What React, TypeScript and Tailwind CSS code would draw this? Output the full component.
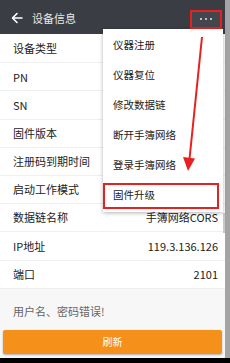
import React from "react";

const rows: [string, string][] = [
  ["设备类型", ""],
  ["PN", ""],
  ["SN", ""],
  ["固件版本", ""],
  ["注册码到期时间", ""],
  ["启动工作模式", ""],
  ["数据链名称", "手簿网络CORS"],
  ["IP地址", "119.3.136.126"],
  ["端口", "2101"],
];

const menu = ["仪器注册", "仪器复位", "修改数据链", "断开手簿网络", "登录手簿网络", "固件升级"];

export default function App() {
  return (
    <div
      className="relative w-[230px] h-[363px] overflow-hidden flex flex-col bg-black"
      style={{ fontFamily: '"Noto Sans CJK SC", "Noto Sans", Roboto, sans-serif' }}
    >
      <div className="flex h-[358px]">
        <div className="w-[225px] flex flex-col bg-[#f7f7f7]">
          <div className="h-[34px] bg-[#3a3e44] flex items-center pl-[11px]">
            <svg width="12" height="12" viewBox="0 0 12 12" className="mt-[2px]">
              <path d="M11 6H2M6 1.5L1.5 6L6 10.5" stroke="#fff" strokeWidth="1.6" fill="none" strokeLinecap="round" strokeLinejoin="round" />
            </svg>
            <span className="ml-[9px] text-[11px] text-[#e8e8e8] leading-none mt-[2px]">设备信息</span>
            <div className="ml-auto mr-[3px] mt-[4px] w-[32px] h-[19px] border-2 border-[#e8201f] bg-[#43474d] flex items-center justify-center gap-[2.5px]">
              <span className="w-[2.5px] h-[2.5px] rounded-full bg-[#e6e6e6]" />
              <span className="w-[2.5px] h-[2.5px] rounded-full bg-[#e6e6e6]" />
              <span className="w-[2.5px] h-[2.5px] rounded-full bg-[#e6e6e6]" />
            </div>
          </div>
          <div className="bg-white pt-[1px]">
            {rows.map(([k, v], i) => (
              <div
                key={i}
                className="h-[28.2px] flex items-center justify-between pl-[13px] pr-[7px] border-b border-[#efefef] text-[11px] text-[#222]"
              >
                <span>{k}</span>
                <span>{v}</span>
              </div>
            ))}
          </div>
          <div className="flex-1 flex flex-col">
            <div className="h-[41px] flex items-center pl-[13px] pt-[4px] text-[11px] text-[#666]">用户名、密码错误!</div>
            <div className="mx-[3px] h-[24px] rounded-[2px] bg-[#f5901a] shadow-[0_1px_2px_rgba(0,0,0,0.3)] flex items-center justify-center text-[10px] text-white">
              刷新
            </div>
          </div>
        </div>
        <div className="w-[5px] bg-[#a4a4a4]" />
      </div>

      {/* scrollbar thumb */}
      <div className="absolute left-[223px] top-[213px] w-[2px] h-[20px] bg-[#c8c8c8]" />

      {/* dropdown menu */}
      <div className="absolute left-[103px] top-[29px] w-[120px] h-[183px] bg-white shadow-[0_1px_4px_rgba(0,0,0,0.3)] pt-[1px]">
        {menu.map((m, i) => (
          <div key={i} className="h-[30px] flex items-center pl-[10px] text-[10.5px] text-[#222]">
            {m}
          </div>
        ))}
      </div>

      {/* annotation box around 固件升级 */}
      <div className="absolute left-[103px] top-[183px] w-[116px] h-[26px] border-2 border-[#e8201f]" />

      {/* annotation arrow */}
      <svg className="absolute left-0 top-0" width="230" height="363" viewBox="0 0 230 363">
        <line x1="202" y1="37" x2="189.5" y2="159" stroke="#e8201f" strokeWidth="2" />
        <polygon points="183,157 195,158.5 188,171" fill="#e8201f" />
      </svg>
    </div>
  );
}
